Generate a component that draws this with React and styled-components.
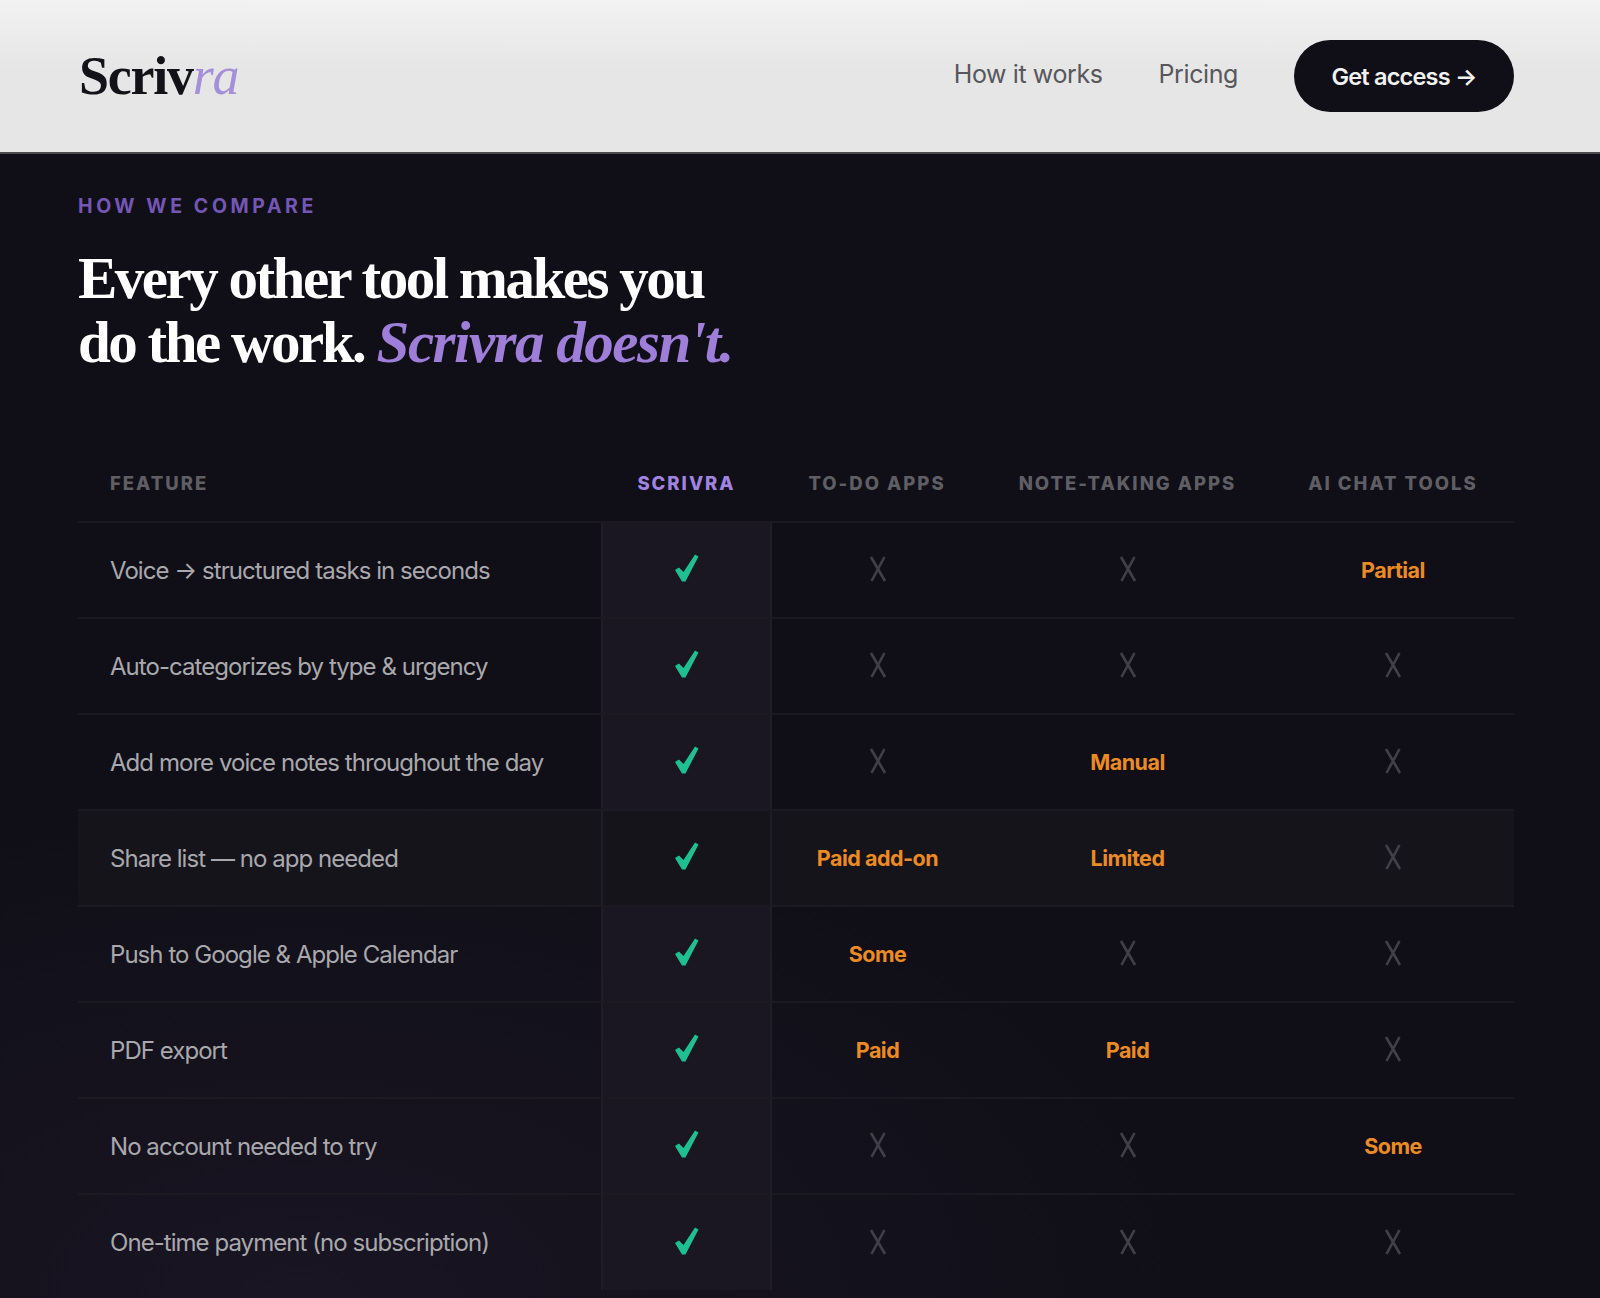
import React from "react";
import styled, { createGlobalStyle } from "styled-components";

const Global = createGlobalStyle`
  html, body { margin: 0; padding: 0; background: #100f17; }
  * { box-sizing: border-box; }
`;
const Page = styled.div`
  width: 1600px; height: 1298px; overflow: hidden;
  font-family: Inter, "Liberation Sans", sans-serif;
  background: radial-gradient(ellipse 900px 500px at 300px 1298px, #191523 0%, rgba(25,21,35,0) 100%), #100f17;
`;
const Header = styled.header`
  height: 154px; padding: 0 86px 0 79px;
  display: flex; align-items: center; justify-content: space-between;
  background: linear-gradient(180deg, #f2f2f2 0%, #e6e6e6 45%, #e6e6e6 100%);
  border-bottom: 2px solid #4a4a4c;
`;
const Logo = styled.div`
  font-family: "Liberation Serif", serif; font-weight: 700; font-size: 54px; letter-spacing: -1.25px;
  color: #131219; line-height: 1;
  em { font-weight: 400; font-style: italic; color: #a48fd8; }
`;
const Nav = styled.nav`display: flex; align-items: center; gap: 56px;`;
const NavLink = styled.a`font-size: 25px; letter-spacing: -0.4px; color: #57575c; position: relative; top: -2px;`;
const Cta = styled.a`
  display: flex; align-items: center; justify-content: center;
  width: 220px; height: 72px; border-radius: 36px; background: #100f18;
  color: #f1f1f1; font-size: 23.5px; font-weight: 600; letter-spacing: -0.8px;
`;
const Section = styled.main`padding: 37px 86px 0 78px;`;
const Eyebrow = styled.div`
  font-size: 19.5px; font-weight: 700; letter-spacing: 3.6px; line-height: 30px; color: #7457b5;
`;
const Heading = styled.h1`
  margin: 25px 0 0; font-family: "Liberation Serif", serif; font-weight: 700; font-size: 59px; line-height: 64px;
  letter-spacing: -2.5px; color: #fff;
  em { font-style: italic; color: #9e7ed8; letter-spacing: -1.5px; }
`;
const Table = styled.table`
  margin-top: 71px; width: 1436px; table-layout: fixed; border-collapse: collapse;
  tbody tr:last-child td { border-bottom: none; }
`;
const Th = styled.th`
  height: 77px; padding: 0 0 0 ${p => p.$first ? "32px" : "0"};
  text-align: ${p => p.$first ? "left" : "center"};
  font-size: 18.5px; font-weight: 800; letter-spacing: 2px;
  color: ${p => p.$brand ? "#a184e0" : "#5f5e65"};
  border-bottom: 2px solid #1b1a23;
`;
const Row = styled.tr`background: ${p => p.$hi ? "#15141b" : "transparent"};`;
const Td = styled.td`
  height: 96px; padding: 0; text-align: center;
  border-bottom: 2px solid #1b1a23;
`;
const Feature = styled(Td)`
  padding-left: 32px; text-align: left;
  font-size: 24px; letter-spacing: -0.95px; color: #a9a8ad;
`;
const BrandCell = styled(Td)`
  background: ${p => p.$hi ? "transparent" : "#1a1622"};
  border-left: 2px solid #1f1d28; border-right: 2px solid #1f1d28;
`;
const IconSvg = styled.svg`display: inline-block; vertical-align: middle; margin-bottom: ${p => p.$lift}px;`;
const Part = styled.span`font-size: 21.5px; font-weight: 700; letter-spacing: -0.5px; color: #ec8a24;`;

const Check = () => (
  <IconSvg $lift={4} width="25" height="28" viewBox="0 0 25 28" aria-label="yes">
    <path d="M1 16 L5 13.5 L9.5 18 L21 0.5 L24.5 2.5 L11.5 27.5 L8 27.5 Z" fill="#1fbf92" />
  </IconSvg>
);
const Cross = () => (
  <IconSvg $lift={2} width="18" height="26" viewBox="0 0 18 26" aria-label="no">
    <path d="M2 1 L16 25 M15.5 1 L2.5 25" stroke="#413f47" strokeWidth="2.6" fill="none" />
  </IconSvg>
);

const X = "x";
const rows = [
  ["Voice → structured tasks in seconds", X, X, "Partial"],
  ["Auto-categorizes by type & urgency", X, X, X],
  ["Add more voice notes throughout the day", X, "Manual", X],
  ["Share list — no app needed", "Paid add-on", "Limited", X],
  ["Push to Google & Apple Calendar", "Some", X, X],
  ["PDF export", "Paid", "Paid", X],
  ["No account needed to try", X, X, "Some"],
  ["One-time payment (no subscription)", X, X, X],
];

const Value = ({ v }) => (v === X ? <Cross /> : <Part>{v}</Part>);

export default function App() {
  return (
    <Page>
      <Global />
      <Header>
        <Logo>Scriv<em>ra</em></Logo>
        <Nav>
          <NavLink>How it works</NavLink>
          <NavLink>Pricing</NavLink>
          <Cta>Get access →</Cta>
        </Nav>
      </Header>
      <Section>
        <Eyebrow>HOW WE COMPARE</Eyebrow>
        <Heading>Every other tool makes you<br />do the work. <em>Scrivra doesn't.</em></Heading>
        <Table>
          <colgroup>
            <col width="524" /><col width="169" /><col width="212" /><col width="289" /><col width="242" />
          </colgroup>
          <thead>
            <tr>
              <Th $first>FEATURE</Th>
              <Th $brand>SCRIVRA</Th>
              <Th>TO-DO APPS</Th>
              <Th>NOTE-TAKING APPS</Th>
              <Th>AI CHAT TOOLS</Th>
            </tr>
          </thead>
          <tbody>
            {rows.map((r, i) => (
              <Row key={r[0]} $hi={i === 3}>
                <Feature>{r[0]}</Feature>
                <BrandCell $hi={i === 3}><Check /></BrandCell>
                <Td><Value v={r[1]} /></Td>
                <Td><Value v={r[2]} /></Td>
                <Td><Value v={r[3]} /></Td>
              </Row>
            ))}
          </tbody>
        </Table>
      </Section>
    </Page>
  );
}
